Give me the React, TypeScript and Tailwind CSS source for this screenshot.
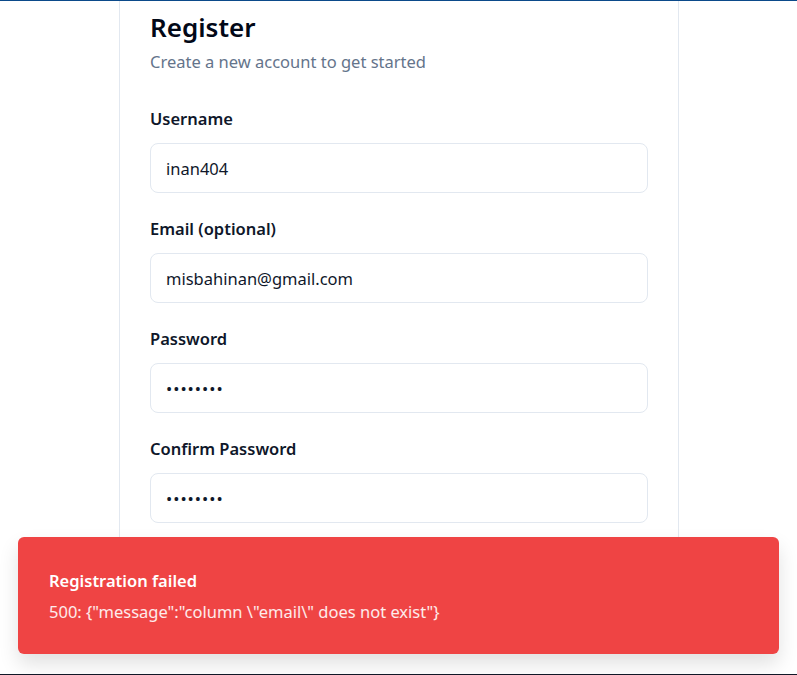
import React from "react";

const font = { fontFamily: '"Noto Sans", "Open Sans", sans-serif' };

function Field({ label, value, type = "text" }: { label: string; value: string; type?: string }) {
  return (
    <div className="flex flex-col gap-[12px]">
      <label className="text-[16.5px] font-semibold leading-[24px] text-[#0f172a]">{label}</label>
      <input
        readOnly
        type={type}
        value={value}
        className={`h-[50px] w-full rounded-[8px] border border-[#e2e8f0] bg-white px-[15px] text-[16.5px] text-[#0f172a] outline-none ${
          type === "password" ? "tracking-[1px]" : ""
        }`}
      />
    </div>
  );
}

export default function App() {
  return (
    <div className="relative h-[675px] w-full overflow-hidden bg-white" style={font}>
      <div className="h-px w-full bg-[#0b4a8a]" />
      <div className="ml-[119px] w-[560px] border-x border-[#e2e8f0] px-[30px] pb-[40px] pt-[6px]">
        <h1 className="text-[26px] font-semibold leading-[40px] text-[#020817]">Register</h1>
        <p className="mt-[3px] text-[16.5px] leading-[24px] text-[#64748b]">Create a new account to get started</p>
        <div className="mt-[33px] flex flex-col gap-[24px]">
          <Field label="Username" value="inan404" />
          <Field label="Email (optional)" value="misbahinan@gmail.com" />
          <Field label="Password" value="password" type="password" />
          <Field label="Confirm Password" value="password" type="password" />
        </div>
      </div>

      {/* toast */}
      <div className="absolute bottom-[21px] left-[18px] right-[18px] h-[117px] rounded-[6px] bg-[#ef4444] px-[31px] pt-[33px] text-white shadow-[0_10px_20px_rgba(0,0,0,0.12)]">
        <div className="text-[16.5px] font-semibold leading-[22px]">Registration failed</div>
        <div className="mt-[9px] text-[16.5px] leading-[22px] text-white/90">
          500: {'{"message":"column \\"email\\" does not exist"}'}
        </div>
      </div>
      <div className="absolute bottom-0 left-0 h-px w-full bg-[#111827]" />
    </div>
  );
}
